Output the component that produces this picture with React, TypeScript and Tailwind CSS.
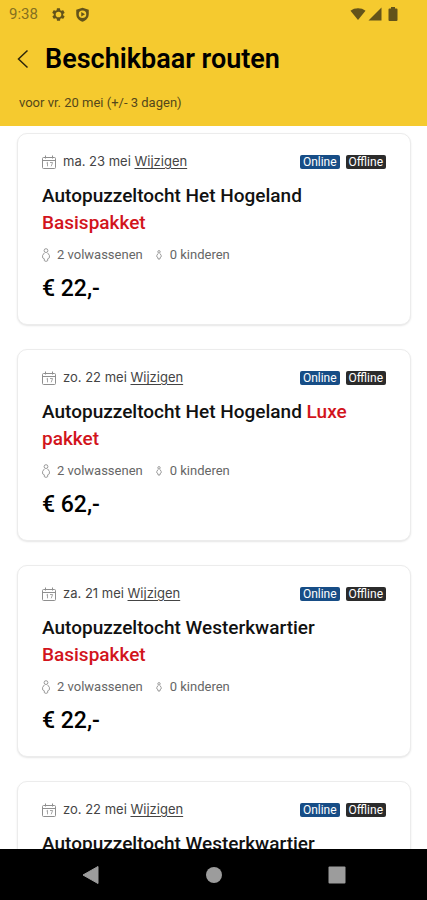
import React from 'react';

type Trip = {
  id: number;
  date: string;
  title: string;
  pack: string;
  adults: number;
  children: number;
  price: string;
};

const trips: Trip[] = [
  { id: 1, date: 'ma. 23 mei', title: 'Autopuzzeltocht Het Hogeland', pack: 'Basispakket', adults: 2, children: 0, price: '€ 22,-' },
  { id: 2, date: 'zo. 22 mei', title: 'Autopuzzeltocht Het Hogeland', pack: 'Luxe pakket', adults: 2, children: 0, price: '€ 62,-' },
  { id: 3, date: 'za. 21 mei', title: 'Autopuzzeltocht Westerkwartier', pack: 'Basispakket', adults: 2, children: 0, price: '€ 22,-' },
  { id: 4, date: 'zo. 22 mei', title: 'Autopuzzeltocht Westerkwartier', pack: 'Basispakket', adults: 2, children: 0, price: '€ 22,-' },
];

function CalendarIcon() {
  return (
    <svg width="14" height="15" viewBox="0 0 14 15" fill="none" stroke="#8f8f8f" strokeWidth="1" aria-hidden="true">
      <rect x="0.5" y="2.5" width="13" height="11" rx="1" />
      <path d="M0.5 5.5h13M3.5 0.5v3M10.5 0.5v3" />
      <path d="M4.5 8l1-0.7v4M8 7.5h2.6l-1.4 3.8" strokeWidth="0.8" />
    </svg>
  );
}

function AdultIcon() {
  return (
    <svg width="8" height="14" viewBox="0 0 8 14" fill="none" stroke="#8f8f8f" strokeWidth="0.9" aria-hidden="true">
      <circle cx="4" cy="2.6" r="1.9" />
      <path d="M2.4 4.9L0.6 7.4v2.4l1.7 1v1.9l1.700 0.700 1.700-0.700v-1.900l1.700-1V7.400L5.600 4.900" />
    </svg>
  );
}

function ChildIcon() {
  return (
    <svg width="6" height="10" viewBox="0 0 6 10" fill="none" stroke="#8f8f8f" strokeWidth="0.9" aria-hidden="true">
      <circle cx="3" cy="1.800" r="1.200" />
      <path d="M2 3.500L0.800 5.500v1.300l1.200 0.900v1.300h2v-1.300l1.200-0.900V5.500L4 3.500" />
    </svg>
  );
}

function StatusBar() {
  return (
    <div className="flex h-7 items-center justify-between pl-[9px] pr-7 text-[#63531a]">
      <div className="flex items-center">
        <span className="w-[42px] text-[15px] text-[#85701f]">9:38</span>
        <svg width="15" height="15" viewBox="0 0 24 24" fill="currentColor" aria-hidden="true">
          <path fillRule="evenodd" d="M19.4 13a7.500 7.500 0 0 0 0-2l2.100-1.600a.5.5 0 0 0 .1-.6l-2-3.500a.5.5 0 0 0-.6-.2l-2.500 1a7.300 7.300 0 0 0-1.700-1l-.4-2.600a.5.5 0 0 0-.5-.4h-4a.5.5 0 0 0-.5.4L9 5.100a7.700 7.700 0 0 0-1.700 1l-2.500-1a.5.5 0 0 0-.6.2l-2 3.500a.5.5 0 0 0 .1.6L4.500 11a7.900 7.900 0 0 0 0 2l-2.100 1.600a.5.5 0 0 0-.1.6l2 3.500c.1.2.4.3.6.2l2.500-1c.5.4 1.100.7 1.700 1l.4 2.600c0 .2.200.4.5.4h4c.2 0 .5-.2.5-.4l.4-2.600a7.300 7.300 0 0 0 1.700-1l2.500 1c.2.1.5 0 .6-.2l2-3.500a.5.5 0 0 0-.1-.6zM12 16.500a4.500 4.500 0 1 1 0-9 4.500 4.500 0 0 1 0 9z" />
        </svg>
        <svg className="ml-[9px]" width="15" height="15" viewBox="0 0 24 24" fill="currentColor" aria-hidden="true">
          <path fillRule="evenodd" d="M12 1L2 4.500V11c0 6 4 10.500 10 12.500 6-2 10-6.500 10-12.500V4.500zM12 5.500a6 6 0 1 1 0 12 6 6 0 0 1 0-12zM10 8v7l6-3.500z" />
        </svg>
      </div>
      <div className="flex items-center">
        <svg width="16" height="14" viewBox="0 0 17 14" fill="currentColor" aria-hidden="true">
          <path d="M0.500 3.500C5 0 12 0 16.500 3.500L8.500 13.500z" />
        </svg>
        <svg className="ml-[2px]" width="14" height="14" viewBox="0 0 14 14" fill="currentColor" aria-hidden="true">
          <path d="M13.500 0.500v13h-13z" />
        </svg>
        <svg className="ml-[6px] mr-px" width="10" height="14" viewBox="0 0 10 14" fill="currentColor" aria-hidden="true">
          <path d="M3 0h4v1.500h1.500a1 1 0 0 1 1 1V13a1 1 0 0 1-1 1h-7a1 1 0 0 1-1-1V2.500a1 1 0 0 1 1-1H3z" />
        </svg>
      </div>
    </div>
  );
}

function TripCard({ trip }: { trip: Trip }) {
  return (
    <article className="h-48 shrink-0 rounded-[10px] border border-[#ececec] bg-white px-6 pt-[18px] shadow-[0_1px_2px_rgba(0,0,0,0.1)]">
      <div className="flex h-5 items-center">
        <CalendarIcon />
        <p className="ml-[7px] font-['Inter','Roboto',sans-serif] text-[13px] text-[#444]">
          {trip.date} <a href="#" className="underline underline-offset-2">Wijzigen</a>
        </p>
        <div className="ml-auto flex gap-[6px] text-xs leading-[14px] text-white">
          <span className="rounded-xs bg-[#174d86] px-[3px]">Online</span>
          <span className="rounded-xs bg-[#2b2b2b] px-[3px]">Offline</span>
        </div>
      </div>

      <h2 className="mt-[10px] text-[19px] font-medium leading-[27px] text-[#111]">
        {trip.title} <span className="text-[#d2141c]">{trip.pack}</span>
      </h2>

      <div className="mt-[9px] flex h-5 items-center text-[13px] text-[#666]">
        <AdultIcon />
        <span className="ml-[7px]">{trip.adults} volwassenen</span>
        <span className="ml-[13px]"><ChildIcon /></span>
        <span className="ml-2">{trip.children} kinderen</span>
      </div>

      <p className="mt-[10px] text-[23px] font-medium leading-7 text-black">{trip.price}</p>
    </article>
  );
}

export default function App() {
  return (
    <div className="flex h-screen flex-col bg-white font-['Roboto',sans-serif]">
      <header className="h-[126px] shrink-0 bg-[#f5ca2f]">
        <StatusBar />
        <div className="mt-[13px] flex h-9 items-center pl-4">
          <button aria-label="Terug" className="w-[29px]">
            <svg width="14" height="20" viewBox="0 0 14 20" fill="none" stroke="#2d260b" strokeWidth="1.500" aria-hidden="true">
              <path d="M11.500 1.500L2.500 10l9 8.500" />
            </svg>
          </button>
          <h1 className="text-[27px] font-semibold text-black">Beschikbaar routen</h1>
        </div>
        <p className="mt-4 pl-[19px] text-[13px] leading-5 text-[#54471a]">voor vr. 20 mei (+/- 3 dagen)</p>
      </header>

      <main className="flex min-h-0 flex-1 flex-col gap-6 overflow-y-auto pl-[17px] pr-4 pt-[7px] [scrollbar-width:none]">
        {trips.map(trip => (
          <TripCard key={trip.id} trip={trip} />
        ))}
      </main>

      <nav className="flex h-[51px] shrink-0 items-center justify-center gap-[105px] bg-black text-[#9c9c9c]">
        <button aria-label="Vorige">
          <svg width="18" height="20" viewBox="0 0 18 20" fill="currentColor" aria-hidden="true">
            <path d="M16 1.500v17L1 10z" stroke="currentColor" strokeLinejoin="round" />
          </svg>
        </button>
        <button aria-label="Start">
          <svg width="18" height="18" viewBox="0 0 18 18" fill="currentColor" aria-hidden="true">
            <circle cx="9" cy="9" r="8" />
          </svg>
        </button>
        <button aria-label="Overzicht">
          <svg width="18" height="18" viewBox="0 0 18 18" fill="currentColor" aria-hidden="true">
            <rect x="0.500" y="0.500" width="17" height="17" rx="1" />
          </svg>
        </button>
      </nav>
    </div>
  );
}
